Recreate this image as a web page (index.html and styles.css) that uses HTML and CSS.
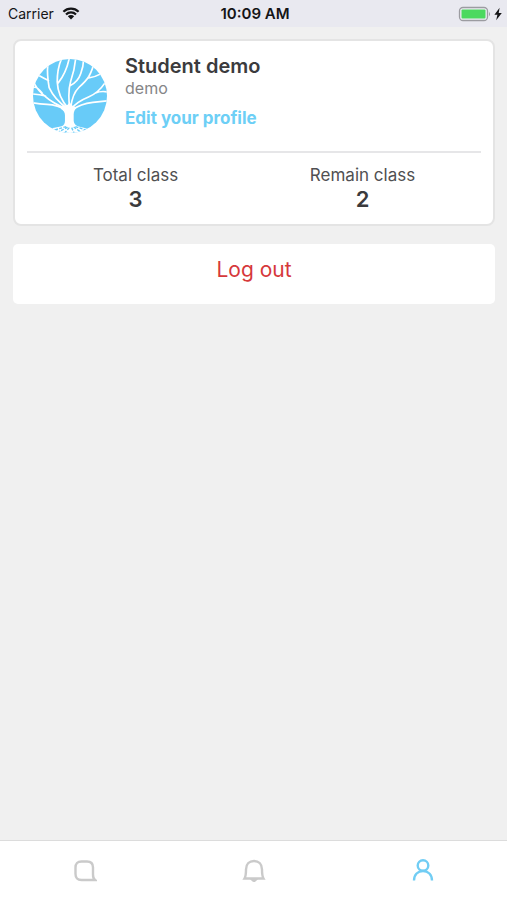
FILE: index.html
```
<!DOCTYPE html>
<html lang="en">
<head>
<meta charset="utf-8">
<meta name="viewport" content="width=device-width, initial-scale=1">
<title>Profile</title>
<link rel="stylesheet" href="styles.css">
</head>
<body>
<header class="status">
  <div class="status-left">
    <span>Carrier</span>
    <svg class="wifi" viewBox="0 0 18 13" aria-hidden="true">
      <path d="M1.4 4.8a10.8 10.8 0 0 1 15.2 0M4 7.5a7 7 0 0 1 10 0" fill="none" stroke="currentColor" stroke-width="2.2"/>
      <path d="M5.8 9.3a4.6 4.6 0 0 1 6.4 0L9 12.5z" fill="currentColor"/>
    </svg>
  </div>
  <span class="time">10:09 AM</span>
  <div class="status-right">
    <svg class="battery" viewBox="0 0 33 16" aria-hidden="true">
      <rect x="1" y="1.5" width="28" height="13" rx="3.5" fill="#eeeef4" stroke="#9c9ca1" stroke-width="1.3"/>
      <rect x="3" y="3.5" width="24" height="9" rx="1" fill="#4cd95f"/>
      <path d="M30.5 5.7q2 2.3 0 4.6z" fill="#9c9ca1"/>
    </svg>
    <svg class="bolt" viewBox="0 0 8 14" aria-hidden="true"><path d="M5.6.8.4 7.7h3L2.2 13.2 7.8 6H4.7z" fill="currentColor"/></svg>
  </div>
</header>
<main class="content">
  <section class="card">
    <div class="profile">
      <svg class="avatar" viewBox="24 23 220 220" role="img" aria-label="Tree">
        <defs><clipPath id="disc"><circle cx="134" cy="133" r="110"/></clipPath></defs>
        <g clip-path="url(#disc)">
          <rect x="24" y="23" width="220" height="220" fill="#68cbf8"/>
          <g fill="none" stroke="#fff" stroke-width="5" stroke-linecap="round">
            <path d="M127 171Q88 143 72 108Q65 68 68 40M70 87Q57 81 43 73"/>
            <path d="M129 170Q98 135 96 91Q96 51 109 22M99 94Q123 64 132 20"/>
            <path d="M133 168Q127 120 136 89Q148 55 151 20M135 102Q158 90 166 66Q175 42 174 24"/>
            <path d="M136 168Q141 126 161 107Q183 87 190 75Q203 51 204 36M187 80Q208 77 224 68"/>
            <path d="M127 173Q80 153 61 135Q40 118 28 96M61 133Q44 128 22 127M51 124Q38 107 29 107"/>
            <path d="M125 175Q97 160 66 158Q44 157 22 153"/>
            <path d="M139 170Q155 150 189 136Q218 124 238 94M210 124Q226 117 247 121"/>
            <path d="M143 173Q164 157 202 152L247 147"/>
          </g>
          <path d="M113 160Q125 166 133 151Q140 167 157 166Q144 175 145 190V207Q146 222 166 225Q174 226 187 231L166 239Q134 251 101 239L79 229Q96 226 109 223Q119 219 119 207V190Q119 178 106 171Z" fill="#fff"/>
          <g fill="none" stroke="#68cbf8" stroke-width="4" stroke-dasharray="9 4">
            <path d="M123 224 88 234M127 226 99 240M132 227 118 243M139 227 146 243M145 225 164 239M150 224 181 234"/>
          </g>
        </g>
      </svg>
      <div class="identity">
        <h1 class="name">Student demo</h1>
        <p class="username">demo</p>
        <a class="edit" href="#edit">Edit your profile</a>
      </div>
    </div>
    <dl class="stats">
      <div class="stat"><dt>Total class</dt><dd>3</dd></div>
      <div class="stat"><dt>Remain class</dt><dd>2</dd></div>
    </dl>
  </section>
  <button class="logout" type="button">Log out</button>
</main>
<nav class="tabs" aria-label="Main">
  <a class="tab" href="#messages" aria-label="Messages">
    <svg viewBox="0 0 24 24" aria-hidden="true"><path d="M8.5 2.500h5.500q6 0 6 6v7q0 4 2 5.500H8.500q-6 0-6-6V8.500q0-6 6-6z"/></svg>
  </a>
  <a class="tab" href="#notifications" aria-label="Notifications">
    <svg viewBox="0 0 24 24" aria-hidden="true"><path d="M2.500 19.500Q4 17 4 10.500C4 5 7.500 2 12 2s8 3 8 8.500q0 6.500 1.500 9z"/><path d="M10.500 21q1.500 1.500 3 0z"/></svg>
  </a>
  <a class="tab tab-active" href="#profile" aria-label="Profile" aria-current="page">
    <svg viewBox="0 0 24 24" aria-hidden="true"><circle cx="12" cy="6.500" r="5.300"/><path d="M3 21.500C3 15.500 7 12 12 12s9 3.500 9 9.500"/></svg>
  </a>
</nav>
</body>
</html>
```
FILE: styles.css
```
* {
  box-sizing: border-box;
}

body {
  margin: 0;
  min-height: 100vh;
  display: flex;
  flex-direction: column;
  background: #f0f0f0;
  color: #3b3b3d;
  font-family: Inter, "Liberation Sans", sans-serif;
}

.status {
  display: grid;
  grid-template-columns: 1fr auto 1fr;
  align-items: center;
  height: 27px;
  padding: 0 5px 0 8px;
  background: #e9e9f0;
  color: #151517;
  font-size: 14px;
}

.status-left,
.status-right {
  display: flex;
  align-items: center;
  gap: 8px;
}

.status-right {
  justify-content: flex-end;
  gap: 2px;
}

.time {
  font-size: 15px;
  font-weight: 600;
}

.wifi {
  width: 18px;
  height: 13px;
}

.battery {
  width: 34px;
  height: 16px;
}

.bolt {
  width: 8px;
  height: 14px;
}

.content {
  flex: 1;
  display: flex;
  flex-direction: column;
  gap: 18px;
  padding: 12px 12px 12px 13px;
}

.card {
  padding: 12px;
  background: #fff;
  border: 2px solid #e4e4e4;
  border-radius: 8px;
}

.profile {
  display: flex;
  gap: 18px;
  padding: 0 6px 18px;
}

.avatar {
  width: 74px;
  height: 74px;
  margin-top: 6px;
}

.identity {
  display: flex;
  flex-direction: column;
  align-items: flex-start;
}

.name,
.username,
.stats,
.stat dd {
  margin: 0;
}

.name {
  font-size: 20px;
  line-height: 26px;
  font-weight: 600;
}

.username {
  color: #858587;
  font-size: 16px;
  line-height: 18px;
}

.edit {
  margin-top: 10px;
  color: #6dcff6;
  font-size: 17px;
  line-height: 22px;
  font-weight: 700;
  text-decoration: none;
}

.stats {
  display: flex;
  border-top: 2px solid #e6e6e8;
  padding-top: 11px;
}

.stat {
  flex: 1;
  display: flex;
  flex-direction: column;
  align-items: center;
  padding-right: 10px;
}

.stat dt {
  color: #505052;
  font-size: 17px;
  line-height: 22px;
}

.stat dd {
  font-size: 22px;
  line-height: 26px;
  font-weight: 600;
}

.logout {
  padding: 12px 12px 20px;
  background: #fff;
  border: 0;
  border-radius: 5px;
  color: #d6383b;
  font-family: inherit;
  font-size: 21px;
  line-height: 28px;
}

.tabs {
  display: flex;
  height: 60px;
  background: #fff;
  border-top: 1px solid #dcdcdc;
}

.tab {
  flex: 1;
  display: flex;
  align-items: center;
  justify-content: center;
  color: #cacaca;
}

.tab svg {
  width: 24px;
  height: 24px;
  fill: none;
  stroke: currentColor;
  stroke-width: 2.4;
}

.tab-active {
  color: #71cdf4;
}
```
